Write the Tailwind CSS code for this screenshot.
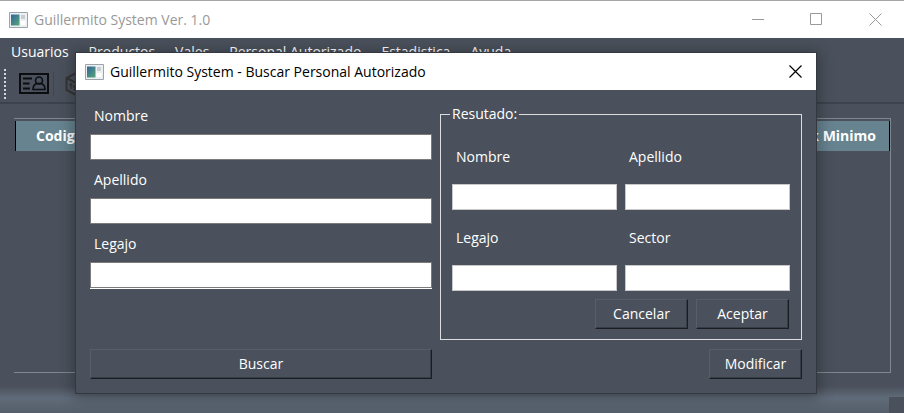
<!DOCTYPE html>
<html lang="es">
<head>
<meta charset="utf-8">
<title>Guillermito System Ver. 1.0</title>
<script src="https://cdn.jsdelivr.net/npm/@tailwindcss/browser@4"></script>
</head>
<body class="relative flex h-screen flex-col overflow-hidden bg-[#4a515c] font-['Open_Sans','Noto_Sans',sans-serif] text-sm/5 text-white">
  <svg class="absolute size-0" aria-hidden="true">
    <defs>
      <linearGradient id="screen" x1="0" y1="0" x2="1" y2="1"><stop offset="0" stop-color="#35639b"/><stop offset="1" stop-color="#55a877"/></linearGradient>
      <symbol id="app" viewBox="0 0 19 16"><path d="M.5.5h18v15H.5z" fill="#edf0f2" stroke="#9da3a8"/><path d="M2 2.500h8.500v11H2z" fill="url(#screen)"/><path d="M12 3h4v4h-4z" fill="#c6ced3"/><path d="M11.500 9h5v4h-5z" fill="#fff"/></symbol>
    </defs>
  </svg>

  <header class="flex h-[38px] shrink-0 items-center border-t border-[#a6a6a6] bg-white pr-[22px] pl-[9px] text-[#999]">
    <svg class="h-4 w-[19px]"><use href="#app"/></svg>
    <h1 class="ml-[6px] flex-1">Guillermito System Ver. 1.0</h1>
    <div class="flex gap-[46px]">
      <button aria-label="Minimizar"><svg class="size-[13px]" viewBox="0 0 13 13" fill="none" stroke="#999"><path d="M1 6.500h12"/></svg></button>
      <button aria-label="Maximizar"><svg class="size-[13px]" viewBox="0 0 13 13" fill="none" stroke="#999"><path d="M.5.5h11v11H.5z"/></svg></button>
      <button aria-label="Cerrar"><svg class="size-[13px]" viewBox="0 0 13 13" fill="none" stroke="#999"><path d="M.5.5l12 12M12.500.5l-12 12"/></svg></button>
    </div>
  </header>

  <nav class="flex h-[27px] shrink-0 items-center gap-5 px-[11px]">
    <a href="#">Usuarios</a><a href="#">Productos</a><a href="#">Vales</a><a href="#">Personal Autorizado</a><a href="#">Estadistica</a><a href="#">Ayuda</a>
  </nav>

  <div class="flex h-[39px] shrink-0 items-center border-b-2 border-[#3d424d] pl-1">
    <div class="h-[30px] border-l-2 border-dotted border-[#d5d7da]"></div>
    <button class="ml-[13px]" aria-label="Usuarios">
      <svg class="h-[21px] w-[30px]" viewBox="0 0 30 21" fill="none" stroke="#0b0d10" stroke-width="1.600"><path d="M1 1h28v19H1z" stroke-width="2"/><path d="M4 5.500h9M4 10.500h6.500M4 15.500h7" stroke-width="1.800"/><circle cx="20" cy="7.500" r="3.500"/><path d="M14 16.500c0-4 2-5.500 4-6h4c2 .5 4 2 4 6z"/></svg>
    </button>
    <div class="ml-1 h-[26px] w-px bg-[#414650]"></div>
    <button class="ml-[11px]" aria-label="Productos">
      <svg class="size-[26px]" viewBox="0 0 26 26" fill="none" stroke="#343435" stroke-width="2"><path d="M13 1l11.500 6v12L13 25 1.500 19V7zM1.500 7L13 13l11.500-6M13 13v12"/><path d="M6 18v-5M4.500 14.500L6 12.500l1.500 2M9.500 20v-5M8 16.500l1.500-2 1.500 2" stroke-width="1.200"/></svg>
    </button>
  </div>

  <main class="flex-1 pt-[14px] pr-[13px] pb-[13px] pl-[14px]">
    <div class="h-full border-t border-r border-b border-[#82868f] pt-[2px] pl-px">
      <table class="w-full border-x border-black bg-[#66838f]">
        <thead><tr class="h-[30px]"><th class="pl-5 text-left font-bold">Codigo</th><th class="pr-[13px] text-right font-bold">Stock Minimo</th></tr></thead>
      </table>
    </div>
  </main>

  <footer class="flex h-[27px] shrink-0 items-end justify-end bg-linear-to-b from-[#4a515c] via-[#606b79] via-45% to-[#555e6a]"><div class="h-4 w-[15px] bg-[#4a515c]"></div></footer>

  <section role="dialog" aria-labelledby="dialog-title" class="absolute top-[52px] right-[87px] left-[75px] border border-[#34373d] bg-[#4a515c] shadow-[0_2px_14px_2px_rgba(0,0,0,0.3)]">
    <div class="flex h-[37px] items-center bg-white pr-[14px] pl-[9px] text-black">
      <svg class="h-4 w-[19px]"><use href="#app"/></svg>
      <h2 id="dialog-title" class="ml-[6px] flex-1">Guillermito System - Buscar Personal Autorizado</h2>
      <button aria-label="Cerrar"><svg class="size-[13px]" viewBox="0 0 13 13" fill="none" stroke="#000" stroke-width="1.200"><path d="M.5.5l12 12M12.500.5l-12 12"/></svg></button>
    </div>
    <form class="grid grid-cols-[342fr_362fr] gap-x-2 gap-y-[9px] px-[14px] py-[14px]">
      <div class="flex flex-col gap-2 pt-[2px]">
        <label for="nombre" class="pl-1">Nombre</label>
        <input id="nombre" class="h-[26px] w-full border border-[#7a7a7a] bg-white px-1 text-black">
        <label for="apellido" class="mt-[2px] pl-1">Apellido</label>
        <input id="apellido" class="h-[26px] w-full border border-[#7a7a7a] bg-white px-1 text-black">
        <label for="legajo" class="mt-[2px] pl-1">Legajo</label>
        <div class="border-b border-white"><input id="legajo" class="block h-[26px] w-full border border-[#7a7a7a] bg-white px-1 text-black"></div>
      </div>
      <fieldset class="border border-[#dcdcdc] px-[11px] pb-[10px]">
        <legend class="-ml-[2px] px-[2px]">Resutado:</legend>
        <div class="grid grid-cols-2 gap-x-2 gap-y-[18px] pt-[23px]">
          <div class="flex flex-col gap-[17px]"><label for="r-nombre" class="pl-1">Nombre</label><input id="r-nombre" class="h-[26px] w-full border border-[#c8c8c8] bg-white px-1 text-black"></div>
          <div class="flex flex-col gap-[17px]"><label for="r-apellido" class="pl-1">Apellido</label><input id="r-apellido" class="h-[26px] w-full border border-[#c8c8c8] bg-white px-1 text-black"></div>
          <div class="flex flex-col gap-[17px]"><label for="r-legajo" class="pl-1">Legajo</label><input id="r-legajo" class="h-[26px] w-full border border-[#c8c8c8] bg-white px-1 text-black"></div>
          <div class="flex flex-col gap-[17px]"><label for="r-sector" class="pl-1">Sector</label><input id="r-sector" class="h-[26px] w-full border border-[#c8c8c8] bg-white px-1 text-black"></div>
        </div>
        <div class="mt-2 flex justify-end gap-2 pr-px">
          <button type="button" class="h-[30px] w-[93px] border border-t-[#555f69] border-r-[#1b1d22] border-b-[#1b1d22] border-l-[#555f69] shadow-[inset_-1px_-1px_0_#373d45]">Cancelar</button>
          <button type="button" class="h-[30px] w-[93px] border border-t-[#555f69] border-r-[#1b1d22] border-b-[#1b1d22] border-l-[#555f69] shadow-[inset_-1px_-1px_0_#373d45]">Aceptar</button>
        </div>
      </fieldset>
      <button type="button" class="h-[30px] w-full border border-t-[#555f69] border-r-[#1b1d22] border-b-[#1b1d22] border-l-[#555f69] shadow-[inset_-1px_-1px_0_#373d45]">Buscar</button>
      <button type="button" class="h-[30px] w-[93px] justify-self-end border border-t-[#555f69] border-r-[#1b1d22] border-b-[#1b1d22] border-l-[#555f69] shadow-[inset_-1px_-1px_0_#373d45]">Modificar</button>
    </form>
  </section>
</body>
</html>
